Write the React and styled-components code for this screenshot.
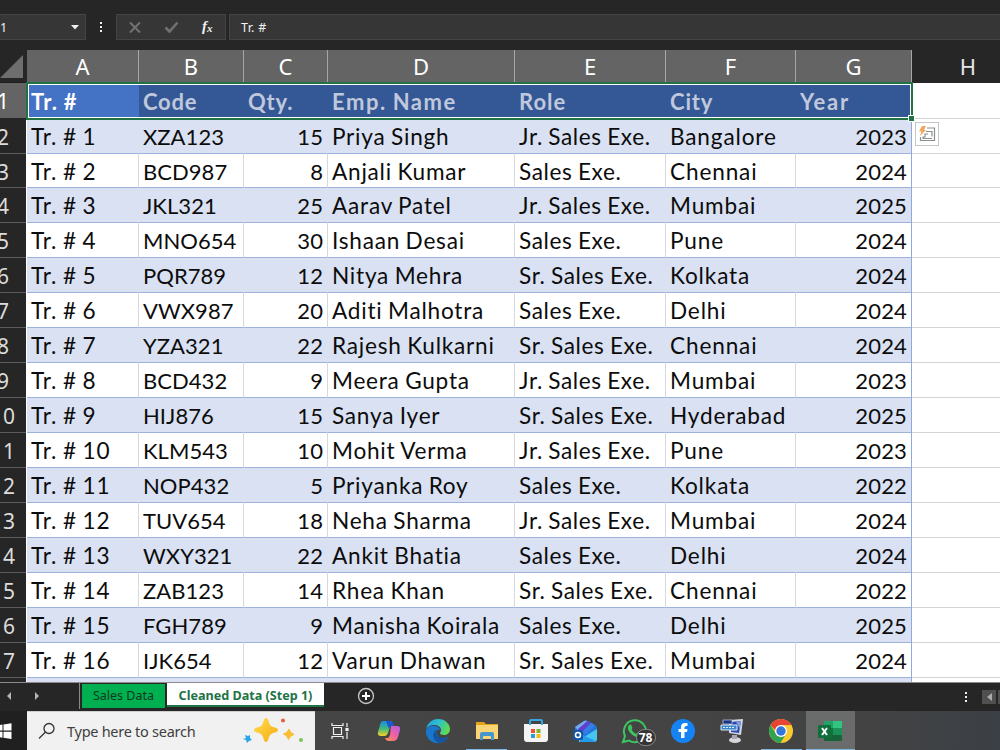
import styled, { createGlobalStyle } from "styled-components";

const GlobalStyle = createGlobalStyle`
  * {
    box-sizing: border-box;
  }
  body {
    margin: 0;
    background: #262626;
    overflow: hidden;
  }
`;

const Screen = styled.div`
  width: 1000px;
  height: 750px;
  display: flex;
  flex-direction: column;
  overflow: hidden;
  background: #262626;
  font-family: "Noto Sans", sans-serif;
`;

const FormulaBar = styled.div`
  height: 50px;
  flex: none;
  display: flex;
  align-items: flex-start;
  padding-top: 14px;
  color: #f2f2f2;
  font-size: 12.5px;
`;
const NameBox = styled.div`
  width: 86px;
  height: 26px;
  display: flex;
  align-items: center;
  justify-content: space-between;
  padding-right: 6px;
  background: #363636;
  border: 1px solid #444;
  border-left: none;
`;
const BarDots = styled.div`
  width: 30px;
  height: 26px;
  display: flex;
  align-items: center;
  justify-content: center;
`;
const FormulaButtons = styled.div`
  width: 110px;
  height: 26px;
  margin-right: 3px;
  background: #363636;
  border: 1px solid #444;
`;
const FormulaInput = styled.div`
  flex: 1;
  height: 26px;
  padding-left: 11px;
  line-height: 25px;
  background: #363636;
  border: 1px solid #444;
  border-right: none;
  letter-spacing: 0.3px;
`;

const Sheet = styled.div`
  position: relative;
  height: 633px;
  flex: none;
  overflow: hidden;
  background: #fff;
  border-bottom: 1px solid #8c8c8c;
`;
const columns = "27px 112px 105px 84px 187px 151px 130px 116px 88px";
const HeadRow = styled.div`
  display: grid;
  grid-template-columns: ${columns};
  height: 33px;
  background: #262626;
`;
const Corner = styled.div`
  display: flex;
  align-items: flex-end;
  padding-bottom: 3px;
  border-bottom: 1px solid #1d1d1d;
`;
const ColumnHead = styled.div`
  display: flex;
  align-items: center;
  justify-content: center;
  padding-bottom: 1px;
  padding-left: ${(props) => (props.$selected ? "0" : "24px")};
  color: ${(props) => (props.$selected ? "#fff" : "#e6e6e6")};
  background: ${(props) => (props.$selected ? "#646464" : "#262626")};
  border-right: ${(props) => (props.$selected ? "1px solid #a6a6a6" : "none")};
  font-size: 22px;
`;
const Row = styled.div`
  display: grid;
  grid-template-columns: ${columns};
  grid-template-rows: 100%;
  height: ${(props) => (props.$title ? "35.6px" : "34.95px")};
  font-family: Lato, sans-serif;
`;
const RowHead = styled.div`
  display: flex;
  justify-content: center;
  align-items: center;
  width: 46px;
  margin-left: -20px;
  padding-top: 2px;
  color: ${(props) => (props.$selected ? "#fff" : "#dcdcdc")};
  background: ${(props) => (props.$selected ? "#646464" : "#262626")};
  border-bottom: 1px solid ${(props) => (props.$selected ? "#262626" : "#5c5c5c")};
  font-family: "Noto Sans", sans-serif;
  font-size: 21px;
`;
const Cell = styled.div`
  padding: ${(props) => (props.$number ? "0 4px 0 0" : "0 0 0 4px")};
  text-align: ${(props) => (props.$number ? "right" : "left")};
  line-height: 36px;
  font-size: ${(props) => (props.$large ? "22.6px" : "22px")};
  letter-spacing: ${(props) => props.$spacing || 0}px;
  word-spacing: -1px;
  white-space: nowrap;
  color: #0c0c0c;
  background: ${(props) => (props.$banded ? "#d9e1f2" : "#fff")};
  border-bottom: 1px solid #9db3dc;
  border-right: 1px solid
    ${(props) => (props.$last ? "#8ea9db" : props.$banded ? "#d9e1f2" : "#d6d9e0")};
`;
const TitleCell = styled(Cell)`
  line-height: 38px;
  font-weight: 700;
  color: ${(props) => (props.$active ? "#fff" : "#c0c8dc")};
  background: ${(props) => (props.$active ? "#4472c4" : "#345796")};
  border: none;
`;
const EmptyCell = styled.div`
  border-bottom: 1px solid #d4d4d4;
`;
const Selection = styled.div`
  position: absolute;
  left: 26px;
  top: 32px;
  width: 887px;
  height: 38px;
  border: 2px solid #217346;
  box-shadow: inset 0 0 0 1px #fff;
`;
const FillHandle = styled.div`
  position: absolute;
  left: 908px;
  top: 65px;
  width: 7px;
  height: 7px;
  background: #217346;
  border: 1px solid #fff;
`;
const QuickAnalysis = styled.div`
  position: absolute;
  left: 915px;
  top: 72px;
  width: 24px;
  height: 24px;
  display: flex;
  align-items: center;
  justify-content: center;
  background: #fff;
  border: 1px solid #c6c6c6;
`;

const TabBar = styled.div`
  height: 28px;
  flex: none;
  display: flex;
  align-items: flex-start;
  background: #262626;
  font-size: 12.5px;
`;
const TabArrows = styled.div`
  width: 80px;
  height: 26px;
  display: flex;
  align-items: center;
  border-right: 1px solid #8a8a8a;
`;
const Tab = styled.div`
  height: 24px;
  text-align: center;
  white-space: nowrap;
  width: ${(props) => (props.$active ? "157px" : "83px")};
  margin: ${(props) => (props.$active ? "0 0 0 2px" : "1px 0 0 2px")};
  line-height: ${(props) => (props.$active ? "25px" : "23px")};
  color: ${(props) => (props.$active ? "#217346" : "#10381f")};
  background: ${(props) => (props.$active ? "#fff" : "#00b050")};
  font-weight: ${(props) => (props.$active ? 700 : 400)};
  font-size: ${(props) => (props.$active ? "12.6px" : "12.5px")};
  border-bottom: ${(props) => (props.$active ? "2px solid #217346" : "none")};
`;
const AddSheet = styled.div`
  margin: 4px auto 0 32.5px;
  height: 18px;
`;
const ScrollArea = styled.div`
  display: flex;
  align-items: center;
  height: 27px;
  gap: 14px;
`;
const ScrollButtons = styled.div`
  display: flex;
  gap: 2px;
`;
const ScrollBox = styled.div`
  width: ${(props) => props.$width}px;
  height: 14px;
  display: flex;
  align-items: center;
  justify-content: center;
  background: #505050;
`;

const Taskbar = styled.div`
  height: 39px;
  flex: none;
  display: flex;
  background: linear-gradient(90deg, #464646 0%, #434343 86%, #3b4046 100%);
`;
const StartButton = styled.div`
  width: 27px;
  padding-top: 12px;
  background: #202020;
`;
const SearchBox = styled.div`
  width: 288px;
  display: flex;
  align-items: center;
  padding: 0 10px 0 11px;
  color: #3f3f3f;
  background: #f1f1f1;
  border-top: 1px solid #cfcfcf;
  font-size: 14.5px;
`;
const SearchText = styled.span`
  margin: 0 auto 0 11px;
  letter-spacing: -0.27px;
`;
const TaskItem = styled.div`
  position: relative;
  width: 49.1px;
  display: flex;
  justify-content: center;
  align-items: center;
  padding-top: 1px;
  background: ${(props) => (props.$active ? "#6a6b6b" : "transparent")};
  &::after {
    content: "";
    position: absolute;
    bottom: 0;
    left: ${(props) => (props.$active ? "0" : "4px")};
    right: ${(props) => (props.$active ? "0" : "4px")};
    height: ${(props) => (props.$open ? "1px" : "0")};
    background: #7fb7e6;
  }
`;
const Badge = styled.div`
  position: absolute;
  left: 26px;
  top: 18px;
  width: 20px;
  height: 17px;
  border-radius: 9px;
  border: 1px solid #8b8b8b;
  background: #343434;
  color: #fff;
  font: 700 12px/15px "Noto Sans", sans-serif;
  text-align: center;
`;

const titles = ["Tr. #", "Code", "Qty.", "Emp. Name", "Role", "City", "Year"];
const titleSpacing = [1.2, 0.8, 0.8, 1.55, 1, 0.85, 1.8];
const cellSpacing = [0.9, 0.05, 0.1, 0.77, 0.63, 0.85, 0.15];
const records = [
  ["XZA123", 15, "Priya Singh", "Jr. Sales Exe.", "Bangalore", 2023],
  ["BCD987", 8, "Anjali Kumar", "Sales Exe.", "Chennai", 2024],
  ["JKL321", 25, "Aarav Patel", "Jr. Sales Exe.", "Mumbai", 2025],
  ["MNO654", 30, "Ishaan Desai", "Sales Exe.", "Pune", 2024],
  ["PQR789", 12, "Nitya Mehra", "Sr. Sales Exe.", "Kolkata", 2024],
  ["VWX987", 20, "Aditi Malhotra", "Sales Exe.", "Delhi", 2024],
  ["YZA321", 22, "Rajesh Kulkarni", "Sr. Sales Exe.", "Chennai", 2024],
  ["BCD432", 9, "Meera Gupta", "Jr. Sales Exe.", "Mumbai", 2023],
  ["HIJ876", 15, "Sanya Iyer", "Sr. Sales Exe.", "Hyderabad", 2025],
  ["KLM543", 10, "Mohit Verma", "Jr. Sales Exe.", "Pune", 2023],
  ["NOP432", 5, "Priyanka Roy", "Sales Exe.", "Kolkata", 2022],
  ["TUV654", 18, "Neha Sharma", "Jr. Sales Exe.", "Mumbai", 2024],
  ["WXY321", 22, "Ankit Bhatia", "Sales Exe.", "Delhi", 2024],
  ["ZAB123", 14, "Rhea Khan", "Sr. Sales Exe.", "Chennai", 2022],
  ["FGH789", 9, "Manisha Koirala", "Sales Exe.", "Delhi", 2025],
  ["IJK654", 12, "Varun Dhawan", "Sr. Sales Exe.", "Mumbai", 2024],
  ["", "", "", "", "", ""],
];

const Dots = ({ color = "#f0f0f0" }) => (
  <svg width="4" height="14" viewBox="0 0 4 14" fill={color}>
    <rect x="1" y="2" width="2" height="2" />
    <rect x="1" y="6" width="2" height="2" />
    <rect x="1" y="10" width="2" height="2" />
  </svg>
);

const FormulaIcons = () => (
  <svg width="108" height="24" viewBox="0 0 108 24" fill="none">
    <path d="M13 7.500l10 10M23 7.500l-10 10" stroke="#737373" strokeWidth="1.900" />
    <path d="M48.500 12.500l4 4 8-9" stroke="#707070" strokeWidth="2.600" />
    <text x="85" y="16" fill="#f0f0f0" fontFamily="Liberation Serif, serif" fontStyle="italic" fontWeight="700" fontSize="15">
      f
    </text>
    <text x="90" y="17" fill="#f0f0f0" fontFamily="Liberation Serif, serif" fontStyle="italic" fontWeight="700" fontSize="11">
      x
    </text>
  </svg>
);

const QuickIcon = () => (
  <svg width="18" height="18" viewBox="0 0 18 18" fill="none">
    <path d="M9 3h7.500v12.500H2.500V12M8 6.500h6v5M10 9H7v3H5v1.500h9" stroke="#8a8f8f" strokeWidth="1.200" />
    <path d="M4 1h4L6 5h2L2 11l1.500-4.500H1z" fill="#f0a860" />
  </svg>
);

const WindowsIcon = () => (
  <svg width="12" height="17" viewBox="0 0 12 17" fill="#fff">
    <path d="M0 2l2.500-.4v6H0zM3.500 1.500L11.500 .3v7.300h-8zM0 8.700h2.500v6L0 14.300zM3.500 8.700h8V16l-8-1.200z" />
  </svg>
);

const Sparkles = () => (
  <svg width="64" height="28" viewBox="0 0 64 28">
    <defs>
      <linearGradient id="gold" x1="0" y1="0" x2="1" y2="1">
        <stop offset="0" stopColor="#ffdc4d" />
        <stop offset="1" stopColor="#f6ac14" />
      </linearGradient>
    </defs>
    <path d="M25 3q2 0 3 5 1 3 4 4 5 1 5 3t-5 3q-3 1-4 4-1 5-3 5t-3-5q-1-3-4-4-5-1-5-3t5-3q3-1 4-4 1-5 3-5z" fill="url(#gold)" transform="translate(0 -2)" />
    <path d="M48 12q1 4 5 5.500-4 1-5.500 5-1-4-5-5.500 4-1 5.500-5z" fill="#f9bd32" stroke="#f9bd32" />
    <path d="M4 18l3 1 2-1v3l2 2-3 1-2 2-1-3-3-1 3-1z" fill="#2aa5e8" />
    <circle cx="42" cy="3.500" r="2" fill="#df6139" />
    <circle cx="60" cy="23" r="2" fill="#7cc453" />
  </svg>
);

const TaskViewIcon = () => (
  <svg width="18" height="18" viewBox="0 0 18 18" fill="none" stroke="#f0f0f0" strokeWidth="1.200">
    <path d="M1 1v2.500h11V1M1 17v-2.500h11V17M2.500 5.500h8v7h-8zM16 1v4M16 10v7" />
    <rect x="15" y="6.500" width="2" height="2" fill="#fff" />
  </svg>
);

const CopilotIcon = () => (
  <svg width="24" height="22" viewBox="0 0 24 22">
    <defs>
      <linearGradient id="copLeft" x1="0" y1="0" x2="0" y2="1">
        <stop offset="0" stopColor="#1c8bea" />
        <stop offset=".5" stopColor="#3cba7e" />
        <stop offset="1" stopColor="#f5cf25" />
      </linearGradient>
      <linearGradient id="copRight" x1="1" y1="0" x2="0" y2="1">
        <stop offset="0" stopColor="#b05ce6" />
        <stop offset=".5" stopColor="#ee62a4" />
        <stop offset="1" stopColor="#ff963f" />
      </linearGradient>
    </defs>
    <path d="M14 6h6q4 0 3 4l-2 7q-1 4-5 4h-5q-2 0-3-3h3q1 0 2-3z" fill="url(#copRight)" />
    <path d="M6 1h9l-4 12q-1 3-3 3H4q-4 0-3-4l2-7q1-4 3-4z" fill="url(#copLeft)" />
    <path d="M9 1h4q3 0 4 5h-3q-1 0-2 3z" fill="#1b58cf" />
  </svg>
);

const EdgeIcon = () => (
  <svg width="26" height="26" viewBox="0 0 26 26">
    <defs>
      <linearGradient id="edgeTop" x1="0" y1="0" x2="1" y2=".3">
        <stop offset="0" stopColor="#239de0" />
        <stop offset=".55" stopColor="#2bc1cf" />
        <stop offset="1" stopColor="#5ed957" />
      </linearGradient>
    </defs>
    <path d="M1 12a12 12 0 0 0 12 13c4 0 8-2 10-6-3 2-8 2-10-1L9 9z" fill="#1571c6" />
    <path d="M1 12C2 5 7 1 13 1c7 0 12 5 12 10 0 4-3 6-6 6-3 0-4-1-4-2s1-1 1-3c0-3-3-5-7-5-4 0-7 2-8 5z" fill="url(#edgeTop)" />
    <path d="M1 13c1-4 5-6 9-5 3 .5 5 2 5 4-2-1-4 0-4 3 0 5 6 8 12 4-2 4-6 6-10 6C6 25 1 20 1 13z" fill="#1877cb" />
    <path d="M11 12c-4 3-4 10 3 13 4 0 7-2 9-6-7 3-13-1-12-7z" fill="#15549f" />
  </svg>
);

const ExplorerIcon = () => (
  <svg width="24" height="20" viewBox="0 0 24 20">
    <path d="M1 1h8l2 2h12v15H1z" fill="#e5a21b" />
    <path d="M1 4h22v14H1z" fill="#f9d575" />
    <path d="M5 19v-6q0-2 2-2h10q2 0 2 2v6h-3v-3q0-1-1-1H9q-1 0-1 1v3z" fill="#4498cf" />
  </svg>
);

const StoreIcon = () => (
  <svg width="26" height="26" viewBox="0 0 26 26">
    <path d="M1 6h24v15q0 3-3 3H4q-3 0-3-3z" fill="#f4f4f4" />
    <path d="M7 7V3q0-1 1-1h10q1 0 1 1v4" fill="none" stroke="#35a8df" strokeWidth="2" />
    <path d="M8 11h4v4H8z" fill="#ee5035" />
    <path d="M13.500 11h4v4h-4z" fill="#77b72b" />
    <path d="M8 16h4v4H8z" fill="#2a9fdc" />
    <path d="M13.500 16h4v4h-4z" fill="#f8b915" />
  </svg>
);

const OutlookIcon = () => (
  <svg width="26" height="24" viewBox="0 0 26 24">
    <path d="M3 8l9-6q2-1 4 0l7 4q2 1 2 3v11H6l-3-4z" fill="#2278da" />
    <path d="M3 8l9-6q2-1 3 0L6 11z" fill="#76a9ed" />
    <path d="M6 10l10-8 3 2L9 14z" fill="#653dcc" />
    <path d="M10 13l9-9 4 2-9 9z" fill="#347ee8" />
    <path d="M7 21L25 10v10q0 3-3 3H7z" fill="#48c6f1" />
    <path d="M8 15l16 7q-1 1-3 1H8z" fill="#269bea" />
    <rect x="1" y="11" width="10" height="10" rx="2" fill="#1254a4" />
    <circle cx="6" cy="16" r="2.500" fill="none" stroke="#fff" strokeWidth="1.500" />
  </svg>
);

const WhatsAppIcon = () => (
  <svg width="26" height="26" viewBox="0 0 26 26">
    <path d="M2 24l2-6A11 11 0 1 1 8 22.500z" fill="#444" stroke="#3bc65f" strokeWidth="2" />
    <path d="M8 7l2-.5 1.500 3.500-1 1.500q1.500 3 4.500 4.500l1.500-1.500 3 1.500q0 3-3 3-4 0-8-5-3-4-.5-7z" fill="#3bc65f" />
  </svg>
);

const FacebookIcon = () => (
  <svg width="26" height="26" viewBox="0 0 26 26">
    <circle cx="13" cy="13" r="12" fill="#1683f5" />
    <path d="M11 20v-6H8.500v-3H11V9q0-4 4-4h2.500v3H16q-1.500 0-1.500 1.500V11h3l-.5 3h-2.500v6z" fill="#fff" />
  </svg>
);

const ComputerIcon = () => (
  <svg width="26" height="26" viewBox="0 0 26 26">
    <ellipse cx="16" cy="22" rx="6" ry="3" fill="#d7d8dc" />
    <path d="M13 17h5v4h-5z" fill="#a6a9b5" />
    <path d="M10 2l14-1-2 16-12-2z" fill="#d4d7e5" />
    <path d="M12 4l10-1-2 12-8-1z" fill="#294bb1" />
    <path d="M17 4l5-1-1 8z" fill="#829bdd" />
    <path d="M4 2h9v4H4z" fill="#17347e" stroke="#c7d0e6" strokeWidth=".7" />
    <path d="M2 7h16v5H2z" fill="#3d86ca" stroke="#dce8f7" />
    <path d="M4 9.500h12" stroke="#dff2ff" strokeDasharray="2 1" />
  </svg>
);

const ChromeIcon = () => (
  <svg width="26" height="26" viewBox="0 0 26 26">
    <circle cx="13" cy="13" r="12" fill="#f9ca2f" />
    <path d="M2.600 7A12 12 0 0 1 23.400 7H13v12z" fill="#e64434" />
    <path d="M2.600 7L8 16l5 3-1 6A12 12 0 0 1 2.600 7z" fill="#31a352" />
    <path d="M13 19l5-3-5.500 9h-2z" fill="#31a352" />
    <circle cx="13" cy="13" r="6" fill="#fff" />
    <circle cx="13" cy="13" r="4.700" fill="#3576de" />
  </svg>
);

const ExcelIcon = () => (
  <svg width="26" height="24" viewBox="0 0 26 24">
    <path d="M7 2h18v20H7z" fill="#15713e" />
    <path d="M7 2h9v7H7z" fill="#22a267" />
    <path d="M16 2h9v7h-9z" fill="#34c481" />
    <path d="M16 9h9v7h-9z" fill="#1a9156" />
    <path d="M7 16h18v6H7z" fill="#17643a" />
    <rect x="1" y="6" width="13" height="13" rx="1" fill="#0f703b" />
    <path d="M5 9l5 7M10 9l-5 7" stroke="#fff" strokeWidth="2" />
  </svg>
);

const SheetGrid = () => (
  <Sheet>
    <HeadRow>
      <Corner>
        <svg width="24" height="24" viewBox="0 0 24 24">
          <path d="M0 23L23 0v23z" fill="#6e6e6e" />
        </svg>
      </Corner>
      {["A", "B", "C", "D", "E", "F", "G"].map((letter) => (
        <ColumnHead key={letter} $selected>
          {letter}
        </ColumnHead>
      ))}
      <ColumnHead>H</ColumnHead>
    </HeadRow>
    <Row $title>
      <RowHead $selected>1</RowHead>
      {titles.map((title, i) => (
        <TitleCell key={title} $active={i === 0} $spacing={titleSpacing[i]}>
          {title}
        </TitleCell>
      ))}
      <EmptyCell />
    </Row>
    {records.map((record, i) => (
      <Row key={i}>
        <RowHead>{i + 2}</RowHead>
        {[record[0] ? `Tr. # ${i + 1}` : "", ...record].map((value, col) => (
          <Cell
            key={col}
            $banded={i % 2 === 0}
            $number={typeof value === "number"}
            $large={col === 0 || (col > 2 && col < 6)}
            $spacing={cellSpacing[col]}
            $last={col === 6}
          >
            {value}
          </Cell>
        ))}
        <EmptyCell />
      </Row>
    ))}
    <Selection />
    <FillHandle />
    <QuickAnalysis>
      <QuickIcon />
    </QuickAnalysis>
  </Sheet>
);

const App = () => {
  return (
    <Screen>
      <GlobalStyle />
      <FormulaBar>
        <NameBox>
          <span>1</span>
          <svg width="8" height="5" viewBox="0 0 8 5">
            <path d="M0 0h8L4 4.500z" fill="#eee" />
          </svg>
        </NameBox>
        <BarDots>
          <Dots />
        </BarDots>
        <FormulaButtons>
          <FormulaIcons />
        </FormulaButtons>
        <FormulaInput>Tr. #</FormulaInput>
      </FormulaBar>
      <SheetGrid />
      <TabBar>
        <TabArrows>
          <svg width="50" height="10" viewBox="0 0 50 10" fill="#b4b4b4">
            <path d="M11 1v8L7 5zM35 1v8l4-4z" />
          </svg>
        </TabArrows>
        <Tab>Sales Data</Tab>
        <Tab $active>Cleaned Data (Step 1)</Tab>
        <AddSheet>
          <svg width="18" height="18" viewBox="0 0 18 18" fill="none">
            <circle cx="9" cy="9" r="7.500" stroke="#c9c9c9" strokeWidth="1.300" />
            <path d="M9 5v8M5 9h8" stroke="#fff" strokeWidth="2" />
          </svg>
        </AddSheet>
        <ScrollArea>
          <Dots />
          <ScrollButtons>
            <ScrollBox $width={14}>
              <svg width="5" height="8" viewBox="0 0 5 8">
                <path d="M5 0v8L0 4z" fill="#aaa" />
              </svg>
            </ScrollBox>
            <ScrollBox $width={2} />
          </ScrollButtons>
        </ScrollArea>
      </TabBar>
      <Taskbar>
        <StartButton>
          <WindowsIcon />
        </StartButton>
        <SearchBox>
          <svg width="18" height="18" viewBox="0 0 18 18" fill="none" stroke="#333" strokeWidth="1.300">
            <circle cx="11" cy="6.500" r="5" />
            <path d="M7.500 10L1 16.500" />
          </svg>
          <SearchText>Type here to search</SearchText>
          <Sparkles />
        </SearchBox>
        <TaskItem>
          <TaskViewIcon />
        </TaskItem>
        <TaskItem>
          <CopilotIcon />
        </TaskItem>
        <TaskItem>
          <EdgeIcon />
        </TaskItem>
        <TaskItem $open>
          <ExplorerIcon />
        </TaskItem>
        <TaskItem>
          <StoreIcon />
        </TaskItem>
        <TaskItem>
          <OutlookIcon />
        </TaskItem>
        <TaskItem>
          <WhatsAppIcon />
          <Badge>78</Badge>
        </TaskItem>
        <TaskItem>
          <FacebookIcon />
        </TaskItem>
        <TaskItem>
          <ComputerIcon />
        </TaskItem>
        <TaskItem $open>
          <ChromeIcon />
        </TaskItem>
        <TaskItem $open $active>
          <ExcelIcon />
        </TaskItem>
      </Taskbar>
    </Screen>
  );
};
export default App;
